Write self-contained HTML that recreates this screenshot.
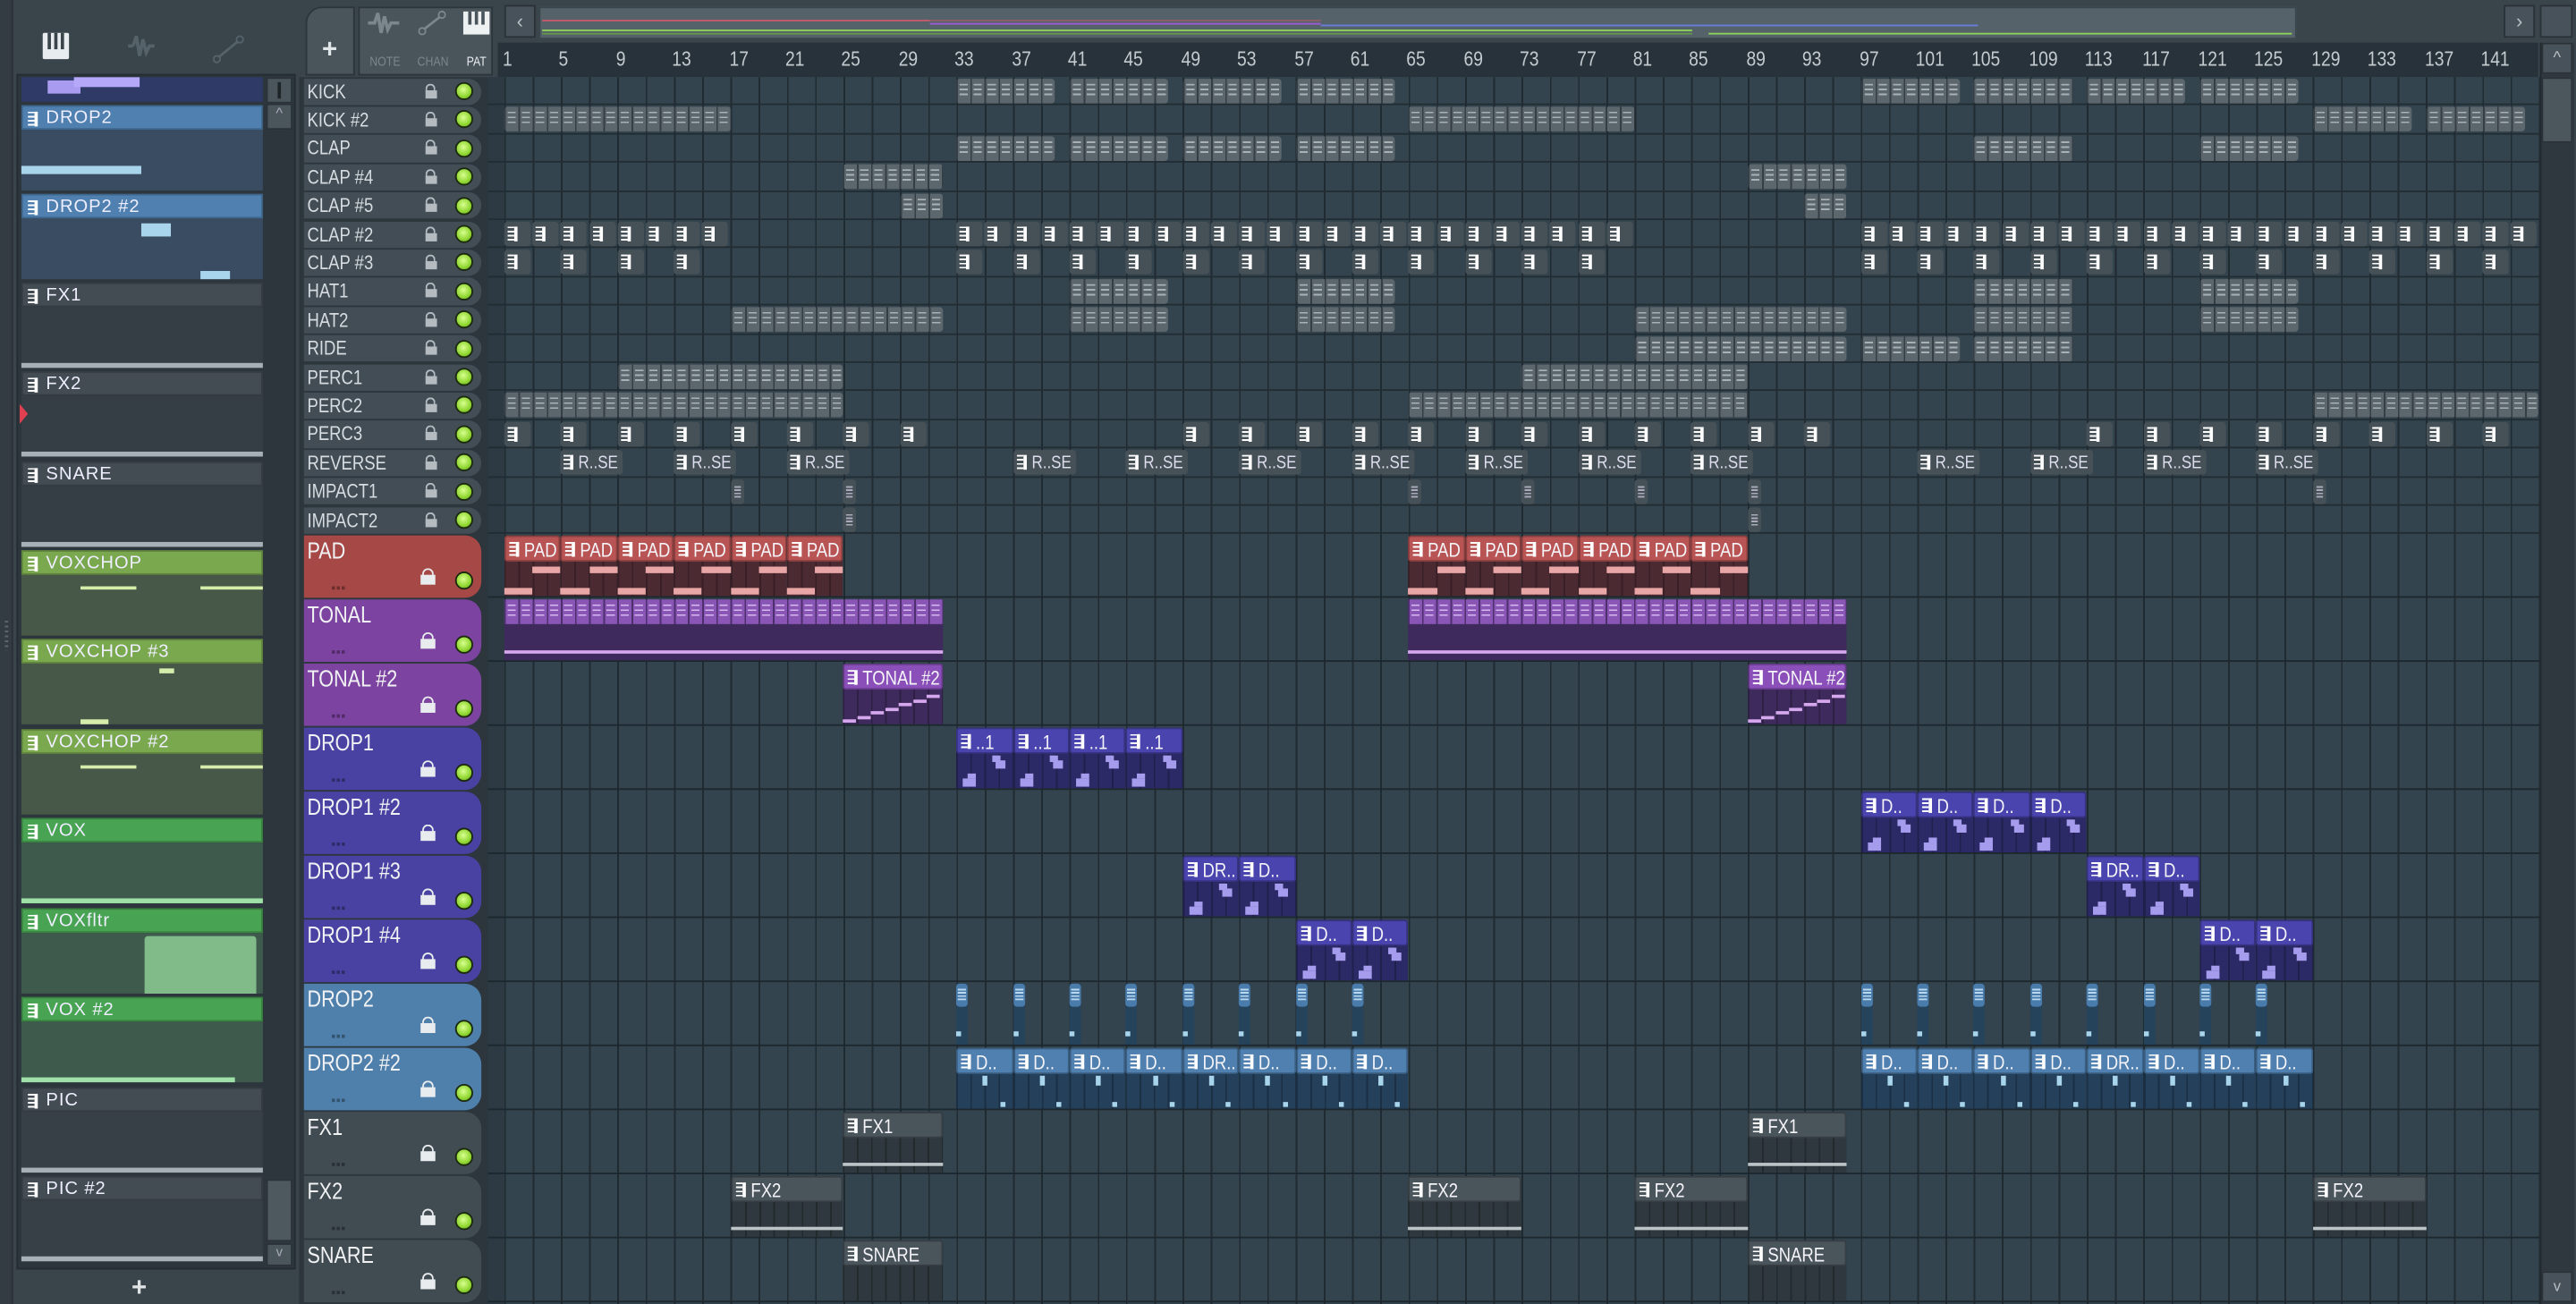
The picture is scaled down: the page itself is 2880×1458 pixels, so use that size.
<!DOCTYPE html>
<html><head><meta charset="utf-8">
<style>
html,body{margin:0;padding:0;width:2880px;height:1458px;overflow:hidden;background:#3a444b;}
#app{position:absolute;left:0;top:0;width:1568px;height:794px;transform:scale(1.83673,1.83627);transform-origin:0 0;background:#3a444b;font-family:"Liberation Sans Narrow","Liberation Sans",sans-serif;overflow:hidden;}
.a{position:absolute;box-sizing:border-box;}
.t{color:#d6dce0;font-size:12px;line-height:12px;white-space:nowrap;transform:scaleX(.84);transform-origin:0 0;}
.ic{position:absolute;width:6px;height:9px;background:repeating-linear-gradient(180deg,#fff 0 1px,transparent 1px 2.5px);border-right:2px solid #fff;box-sizing:border-box;}
</style></head><body><div id="app">

<div class="a" style="left:0;top:0;width:8px;height:794px;background:#333c42;border-right:1px solid #2a3237"></div>
<div class="a" style="left:26px;top:20px;width:16px;height:16px;background:#e8ecee;border-radius:1px"></div>
<div class="a" style="left:29px;top:20px;width:2px;height:10px;background:#3a444b"></div>
<div class="a" style="left:33px;top:20px;width:2px;height:10px;background:#3a444b"></div>
<div class="a" style="left:37px;top:20px;width:2px;height:10px;background:#3a444b"></div>
<svg class="a" style="left:76px;top:18px" width="20" height="20" viewBox="0 0 20 20"><path d="M2 10h3M5 10l2-6 2 12 2-10 2 8 2-4h3" stroke="#56626a" stroke-width="2" fill="none"/></svg>
<svg class="a" style="left:128px;top:20px" width="22" height="20" viewBox="0 0 22 20"><circle cx="4" cy="16" r="2" stroke="#56626a" fill="none"/><circle cx="18" cy="4" r="2" stroke="#56626a" fill="none"/><path d="M5.5 14.5L16.5 5.5" stroke="#56626a" stroke-width="1.5"/></svg>

<div class="a" style="left:10px;top:45px;width:170px;height:728px;background:#2d363c;border:1px solid #252d32"></div>
<div id="brow"></div>
<div class="a" style="left:162px;top:47px;width:16px;height:16px;background:#4a555c;border:1px solid #2a3237"></div>
<div class="a" style="left:169px;top:50px;width:2px;height:10px;background:#1e2529"></div>
<div class="a" style="left:162px;top:63px;width:16px;height:16px;background:#4a555c;border:1px solid #2a3237;color:#aab;font-size:9px;text-align:center">^</div>
<div class="a" style="left:162px;top:718px;width:16px;height:38px;background:#4d585f;border:1px solid #2a3237"></div>
<div class="a" style="left:162px;top:757px;width:16px;height:14px;background:#4a555c;border:1px solid #2a3237;color:#aab;font-size:8px;text-align:center">v</div>
<div class="a" style="left:80px;top:776px;color:#dfe4e6;font-size:16px;font-weight:bold">+</div>
<div class="a" style="left:3px;top:378px;width:2px;height:18px;background:repeating-linear-gradient(180deg,#5c676e 0 1px,transparent 1px 3px)"></div>

<div class="a" style="left:186px;top:4px;width:30px;height:42px;background:#49545b;border-radius:10px 0 0 0;border:1px solid #2c353a"></div>
<div class="a" style="left:196px;top:22px;color:#e0e5e8;font-size:16px;font-weight:bold">+</div>
<div class="a" style="left:218px;top:4px;width:82px;height:42px;background:#49545b;border:1px solid #2c353a"></div>
<svg class="a" style="left:223px;top:5px" width="22" height="18" viewBox="0 0 22 18"><path d="M1 9h4l2-6 2 12 2-10 2 8 2-4h5" stroke="#7b868d" stroke-width="2" fill="none"/></svg>
<svg class="a" style="left:253px;top:5px" width="20" height="18" viewBox="0 0 20 18"><circle cx="4" cy="14" r="2" stroke="#7b868d" fill="none"/><circle cx="16" cy="4" r="2" stroke="#7b868d" fill="none"/><path d="M5.5 12.5L14.5 5.5" stroke="#7b868d" stroke-width="1.5"/></svg>
<div class="a" style="left:282px;top:7px;width:16px;height:14px;background:#eef1f2"></div>
<div class="a" style="left:285px;top:7px;width:2px;height:8px;background:#49545b"></div>
<div class="a" style="left:289px;top:7px;width:2px;height:8px;background:#49545b"></div>
<div class="a" style="left:293px;top:7px;width:2px;height:8px;background:#49545b"></div>
<div class="a t" style="left:225px;top:32px;font-size:8px;color:#7b868d">NOTE</div>
<div class="a t" style="left:254px;top:32px;font-size:8px;color:#7b868d">CHAN</div>
<div class="a t" style="left:284px;top:32px;font-size:8px;color:#e8ecee">PAT</div>
<div class="a" style="left:307px;top:3px;width:19px;height:20px;background:#47525a;border:1px solid #2a3237;color:#b8c0c4;font-size:12px;text-align:center;line-height:18px">‹</div>
<div class="a" style="left:328px;top:4px;width:1070px;height:20px;background:#56626a;border:1px solid #3a454c"></div>
<div class="a" style="left:330px;top:12px;width:236px;height:1px;background:#c65a6a"></div>
<div class="a" style="left:566px;top:12px;width:238px;height:1px;background:#c65a6a;opacity:.5"></div>
<div class="a" style="left:566px;top:14px;width:238px;height:1px;background:#9d5ad6"></div>
<div class="a" style="left:330px;top:18px;width:700px;height:1px;background:#8fd45a"></div>
<div class="a" style="left:330px;top:20px;width:700px;height:1px;background:#6ab040;opacity:.7"></div>
<div class="a" style="left:804px;top:15px;width:400px;height:1px;background:#6a7ee0"></div>
<div class="a" style="left:1040px;top:20px;width:355px;height:1px;background:#8fd45a"></div>
<div class="a" style="left:1524px;top:3px;width:19px;height:20px;background:#47525a;border:1px solid #2a3237;color:#b8c0c4;font-size:12px;text-align:center;line-height:18px">›</div>
<div class="a" style="left:1546px;top:3px;width:20px;height:20px;background:#47525a;border:1px solid #2a3237"></div>
<div class="a" style="left:303px;top:26px;width:1242px;height:21px;background:#27323a"></div>
<div id="ruler"></div>
<div class="a" style="left:1546px;top:26px;width:21px;height:768px;background:#2e383e;border-left:1px solid #222a2f"></div>
<div class="a" style="left:1547px;top:26px;width:19px;height:19px;background:#47525a;border:1px solid #2a3237;color:#b8c0c4;font-size:10px;text-align:center;line-height:17px">^</div>
<div class="a" style="left:1547px;top:47px;width:19px;height:40px;background:#4b565d;border:1px solid #2a3237"></div>
<div class="a" style="left:1547px;top:774px;width:19px;height:19px;background:#47525a;border:1px solid #2a3237;color:#b8c0c4;font-size:9px;text-align:center;line-height:17px">v</div>

<div class="a" style="left:182px;top:47px;width:115px;height:747px;background:#2c363c"></div>
<div class="a" style="left:297px;top:47px;width:1249px;height:747px;background:#33434d"></div>
<div class="a" style="left:297px;top:47px;width:10px;height:747px;background:#2d3a43"></div>
<div class="a" style="left:307px;top:47px;width:1239px;height:747px;background:repeating-linear-gradient(90deg,#1f2a31 0 1px,#34444e 1px 17.2px)"></div>
<div id="rows"></div>
<div id="clips"></div>

<script>
var H='';
var S=8.6;
function d(x,y,w,h,st,inner){H+='<div class="a" style="left:'+x+'px;top:'+y+'px;width:'+w+'px;height:'+h+'px;'+st+'">'+(inner||'')+'</div>';}
function B(b){return 307+(b-1)*S;}
var r='';
for(var b=1;b<=141;b+=4){r+='<div class="a t" style="left:'+(B(b)-1)+'px;top:30px;font-size:12.5px;color:#c4cbcf">'+b+'</div>';}
document.getElementById('ruler').innerHTML=r;

var items=[
['',47,15,'#2f3a6a','#3e4a78',null],
['DROP2',64,52,'#4f80b0','#3a4c62','drop2'],
['DROP2 #2',118,52,'#4f80b0','#3a4c62','drop22'],
['FX1',172,52,'#434c53','#353e45','line'],
['FX2',226,52,'#434c53','#353e45','line'],
['SNARE',281,52,'#434c53','#353e45','line'],
['VOXCHOP',335,52,'#7aa84e','#475748','vc'],
['VOXCHOP #3',389,52,'#7aa84e','#475748','vc3'],
['VOXCHOP #2',444,52,'#7aa84e','#475748','vc'],
['VOX',498,52,'#48a452','#3d5a4c','gl'],
['VOXfltr',553,52,'#48a452','#3d5a4c','flt'],
['VOX #2',607,52,'#48a452','#3d5a4c','gl2'],
['PIC',662,52,'#434c53','#374047','line'],
['PIC #2',716,52,'#434c53','#374047','line']];
H='';
items.forEach(function(it){
 var y=it[1];
 if(!it[5]){d(13,y,147,15,'background:#2f3a66');d(29,y+2,20,8,'background:#a99cf0');d(45,y,40,6,'background:#b6a8f8');return;}
 d(13,y+15,147,it[2]-15,'background:'+it[4]);
 d(13,y,147,15,'background:'+it[3]+';border:1px solid rgba(0,0,0,.2)','<div class="ic" style="left:3px;top:3px"></div><div class="a t" style="left:14px;top:1px;font-size:11px;letter-spacing:.5px;color:#eef;transform:none">'+it[0]+'</div>');
 var k=it[5];
 if(k=='drop2'){d(13,y+37,73,5,'background:#a8d4ec');}
 if(k=='drop22'){d(86,y+18,18,8,'background:#a8d4ec');d(122,y+47,18,5,'background:#a8d4ec');}
 if(k=='line'){d(13,y+49,147,3,'background:#a6b0b6');}
 if(k=='vc'){d(49,y+22,34,2,'background:#d6ecaa');d(122,y+22,38,2,'background:#d6ecaa');}
 if(k=='vc3'){d(97,y+18,9,3,'background:#d6ecaa');d(49,y+49,17,3,'background:#d6ecaa');}
 if(k=='gl'){d(13,y+49,147,3,'background:#9ee0a8');}
 if(k=='gl2'){d(13,y+49,130,3,'background:#9ee0a8');}
 if(k=='flt'){d(88,y+17,68,35,'background:#82bb8a;border-radius:2px 2px 0 0');}
});
d(12,246,5,12,'border-left:5px solid #e04050;border-top:6px solid transparent;border-bottom:6px solid transparent;width:0;height:0;box-sizing:content-box');
document.getElementById('brow').innerHTML=H;

H='';
var small=['KICK','KICK #2','CLAP','CLAP #4','CLAP #5','CLAP #2','CLAP #3','HAT1','HAT2','RIDE','PERC1','PERC2','PERC3','REVERSE','IMPACT1','IMPACT2'];
function lock(x,y,s,c){c=c||'#e8ecee';return '<div class="a" style="left:'+x+'px;top:'+y+'px;width:'+(6*s)+'px;height:'+(5*s)+'px;border:'+(1.3*s)+'px solid '+c+';border-bottom:none;border-radius:'+(3*s)+'px '+(3*s)+'px 0 0"></div><div class="a" style="left:'+(x-0.5*s)+'px;top:'+(y+4*s)+'px;width:'+(7*s)+'px;height:'+(5*s)+'px;background:'+c+'"></div>';}
function led(x,y,s){return '<div class="a" style="left:'+x+'px;top:'+y+'px;width:'+(10*s)+'px;height:'+(10*s)+'px;border-radius:50%;background:radial-gradient(circle at 45% 40%,#d8ff90,#8fd630 60%,#5a8f20);border:'+(1.2*s)+'px solid #1c2a10"></div>';}
small.forEach(function(n,i){
 var y=47+i*17.4;
 d(185,y+0.5,108,16.4,'background:#424d55;border-radius:0 8px 8px 0',
  '<div class="a t" style="left:2px;top:2px">'+n+'</div>'+lock(74,3,1,'#b4bcc1')+led(92,2.5,1.1));
 d(297,y+16.4,1249,1,'background:#222c33');
});
var big=[['PAD','#a64846'],['TONAL','#7c43a0'],['TONAL #2','#7c43a0'],['DROP1','#4942a2'],['DROP1 #2','#4942a2'],['DROP1 #3','#4942a2'],['DROP1 #4','#4942a2'],['DROP2','#4f7fab'],['DROP2 #2','#4f7fab'],['FX1','#414b52'],['FX2','#414b52'],['SNARE','#414b52']];
big.forEach(function(b,i){
 var y=325+i*39;
 d(185,y+0.5,108,38,'background:'+b[1]+';border-radius:0 10px 10px 0',
  '<div class="a t" style="left:2px;top:3px;font-size:14px;color:#f0f2f4">'+b[0]+'</div><div class="a" style="left:17px;top:31px;width:9px;height:2px;background:repeating-linear-gradient(90deg,rgba(0,0,0,.35) 0 2px,transparent 2px 3px)"></div>'+lock(72,20,1.2)+led(92,22,1.1));
 d(297,y+38,1249,1,'background:#1d272e');
});
document.getElementById('rows').innerHTML=H;

H='';
function dense(row,b0,n){var y=47+row*17.4;var x=B(b0),w=n*S;
 d(x,y+1,w,15,'background:repeating-linear-gradient(90deg,#353e44 0 1px,#5c666d 1px '+S+'px);border-radius:2px');
 d(x+2,y+4,w-3,8,'background:repeating-linear-gradient(180deg,#a8b1b6 0 1px,transparent 1px 3px);-webkit-mask:repeating-linear-gradient(90deg,#000 0 5px,transparent 5px '+S+'px);mask:repeating-linear-gradient(90deg,#000 0 5px,transparent 5px '+S+'px)');}
function single(row,b0,w,lab){var y=47+row*17.4;var x=B(b0);
 d(x,y+1,w,15,'background:#465057;border-radius:2px','<div class="ic" style="left:2px;top:3px"></div>'+(lab?'<div class="a t" style="left:11px;top:1.5px;font-size:11px;color:#dde">'+lab+'</div>':''));}
function groups(row,list){list.forEach(function(g){dense(row,g[0],g[1]);});}
groups(0,[[33,7],[41,7],[49,7],[57,7],[97,7],[105,7],[113,7],[121,7]]);
groups(1,[[1,16],[65,16],[129,7],[137,7]]);
groups(2,[[33,7],[41,7],[49,7],[57,7],[105,7],[121,7]]);
groups(3,[[25,7],[89,7]]);
groups(4,[[29,3],[93,3]]);
var b;
for(b=1;b<=15;b+=2)single(5,b,16);for(b=33;b<=79;b+=2)single(5,b,16);for(b=97;b<=143;b+=2)single(5,b,16);
for(b=1;b<=13;b+=4)single(6,b,16);for(b=33;b<=77;b+=4)single(6,b,16);for(b=97;b<=141;b+=4)single(6,b,16);
groups(7,[[41,7],[57,7],[105,7],[121,7]]);
groups(8,[[17,15],[41,7],[57,7],[81,15],[105,7],[121,7]]);
groups(9,[[81,15],[97,7],[105,7]]);
groups(10,[[9,16],[73,16]]);
groups(11,[[1,24],[65,24],[129,16]]);
for(b=1;b<=29;b+=4)single(12,b,16);for(b=49;b<=93;b+=4)single(12,b,16);for(b=113;b<=141;b+=4)single(12,b,16);
[5,13,21,37,45,53,61,69,77,85,101,109,117,125].forEach(function(b){single(13,b,38,'R..SE');});
[17,25,65,73,81,89,129].forEach(function(b){d(B(b),47+14*17.4+1,8,15,'background:#465057;border-radius:2px','<div class="a" style="left:2px;top:4px;width:4px;height:7px;background:repeating-linear-gradient(180deg,#aab 0 1px,transparent 1px 2px)"></div>');});
[25,89].forEach(function(b){d(B(b),47+15*17.4+1,8,15,'background:#465057;border-radius:2px','<div class="a" style="left:2px;top:4px;width:4px;height:7px;background:repeating-linear-gradient(180deg,#aab 0 1px,transparent 1px 2px)"></div>');});

function bigClip(row,b0,nb,lab,hc,bc,notes){var y=325+row*39;var x=B(b0),w=nb*S;
 d(x,y+1,w,37,'background:'+bc+';border-radius:2px 2px 0 0;background-image:repeating-linear-gradient(90deg,rgba(0,0,0,.25) 0 1px,transparent 1px '+S+'px)');
 d(x,y+1,w,16,'background:'+hc+';border-radius:2px;border:1px solid rgba(0,0,0,.25);overflow:hidden','<div class="ic" style="left:2px;top:3px"></div>'+(lab?'<div class="a t" style="left:11px;top:1.5px;font-size:12px;color:#f4f4f8">'+lab+'</div>':''));
 if(notes)notes(x,y,w);}
function padN(x,y,w){d(x+w/2,y+20,w/2,4,'background:#e8a6a6');d(x,y+33,w/2,4,'background:#e8a6a6');}
[1,5,9,13,17,21,65,69,73,77,81,85].forEach(function(b){bigClip(0,b,4,'PAD','#b85454','#4c2a32',padN);});
[[1,31],[65,31]].forEach(function(g){var y=325+39,x=B(g[0]),w=g[1]*S;
 d(x,y+1,w,37,'background:#3e2a5c');
 d(x,y+1,w,15,'background:repeating-linear-gradient(90deg,#4e2f6e 0 1px,#8a56b6 1px '+S+'px)');
 d(x+2,y+4,w-3,8,'background:repeating-linear-gradient(180deg,#d4b8ee 0 1px,transparent 1px 3px);-webkit-mask:repeating-linear-gradient(90deg,#000 0 5px,transparent 5px '+S+'px);mask:repeating-linear-gradient(90deg,#000 0 5px,transparent 5px '+S+'px)');
 d(x,y+32,w,2,'background:#d6a8ee');});
function tonN(x,y,w){for(var i=0;i<7;i++)d(x+i*8.5,y+35-i*2.5,8,2,'background:#d6a8ee');}
[25,89].forEach(function(b){bigClip(2,b,7,'TONAL #2','#8a4fb8','#3e2a5c',tonN);});
function dropN(x,y,w){d(x+4,y+32,8,5,'background:#a69cee');d(x+7,y+29,5,3,'background:#a69cee');d(x+w/2+5,y+18,5,4,'background:#a69cee');d(x+w/2+7,y+21,6,5,'background:#a69cee');}
[33,37,41,45].forEach(function(b){bigClip(3,b,4,'..1','#4a44ae','#2c2a66',dropN);});
[97,101,105,109].forEach(function(b){bigClip(4,b,4,'D..','#4a44ae','#2c2a66',dropN);});
bigClip(5,49,4,'DR..','#4a44ae','#2c2a66',dropN);bigClip(5,53,4,'D..','#4a44ae','#2c2a66',dropN);
bigClip(5,113,4,'DR..','#4a44ae','#2c2a66',dropN);bigClip(5,117,4,'D..','#4a44ae','#2c2a66',dropN);
bigClip(6,57,4,'D..','#4a44ae','#2c2a66',dropN);bigClip(6,61,4,'D..','#4a44ae','#2c2a66',dropN);
bigClip(6,121,4,'D..','#4a44ae','#2c2a66',dropN);bigClip(6,125,4,'D..','#4a44ae','#2c2a66',dropN);
[33,37,41,45,49,53,57,61,97,101,105,109,113,117,121,125].forEach(function(b){var y=325+7*39,x=B(b);
 d(x,y+1,7,37,'background:#26435c');d(x,y+1,7,14,'background:#4a7cab;border-radius:2px','<div class="a" style="left:1px;top:3px;width:5px;height:7px;background:repeating-linear-gradient(180deg,#b8d8f0 0 1px,transparent 1px 2px)"></div>');d(x,y+30,3,3,'background:#a8d4ec');});
function d22(x,y,w){d(x+w/2-1,y+18,3,6,'background:#a8d4ec');d(x+w-8,y+34,3,3,'background:#a8d4ec');}
for(b=33;b<=61;b+=4)bigClip(8,b,4,b==49?'DR..':'D..','#4f80b0','#24405a',d22);
for(b=97;b<=125;b+=4)bigClip(8,b,4,b==113?'DR..':'D..','#4f80b0','#24405a',d22);
function fxN(x,y,w){d(x,y+32,w,2,'background:#bcc4c8');}
[25,89].forEach(function(b){bigClip(9,b,7,'FX1','#4a545b','#2e383e',fxN);});
[17,65,81,129].forEach(function(b){bigClip(10,b,8,'FX2','#4a545b','#2e383e',fxN);});
[25,89].forEach(function(b){bigClip(11,b,7,'SNARE','#4a545b','#2e383e',null);});
document.getElementById('clips').innerHTML=H;
</script>
</div></body></html>
